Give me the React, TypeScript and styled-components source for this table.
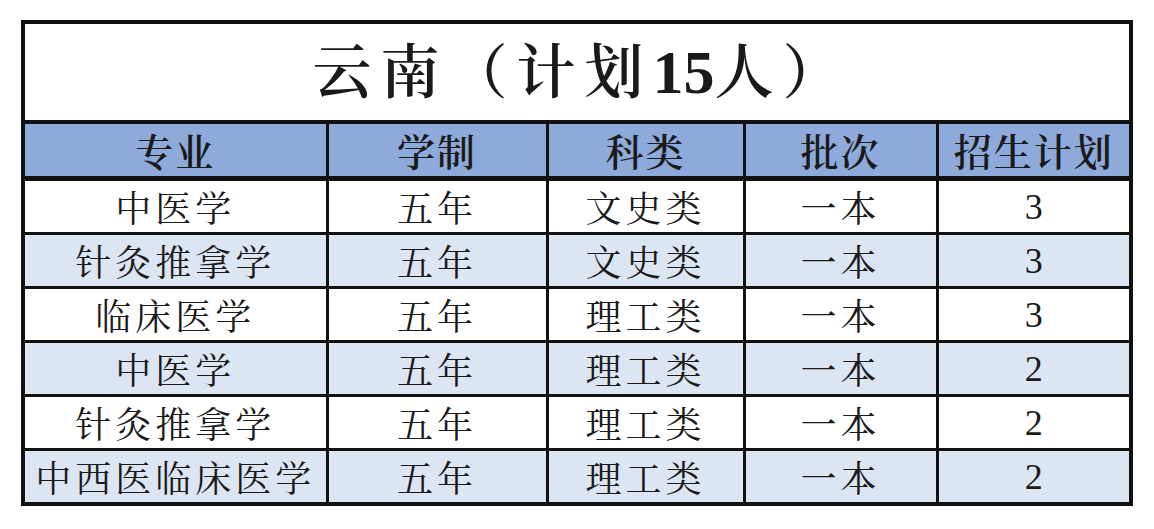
import React from 'react';
import styled, { createGlobalStyle } from 'styled-components';

const GlobalStyle = createGlobalStyle`
  body {
    margin: 0;
    background: #ffffff;
  }
`;

const Page = styled.div`
  padding: 20px 0 0 21px;
  width: 1154px;
  height: 529px;
  box-sizing: border-box;
  background: #ffffff;
`;

const Table = styled.table`
  width: 1108px;
  border-collapse: collapse;
  table-layout: fixed;
  border: 4px solid #111;
  font-family: "Noto Serif CJK SC", "Liberation Serif", "Noto Sans CJK SC", serif;
  color: #1a1a1a;
`;

const TitleCell = styled.th`
  height: 92px;
  padding: 0 0 4px 9px;
  font-size: 59px;
  font-weight: 600;
  line-height: 1;
  text-align: center;
  letter-spacing: 9px;
  background: #ffffff;
  border-bottom: 4px solid #111;
`;

const Digits = styled.span`
  font-family: "Liberation Serif", serif;
  font-size: 62px;
  font-weight: 700;
  letter-spacing: 0;
`;

const HeadCell = styled.th`
  height: 52px;
  padding: 0;
  font-size: 38px;
  font-weight: 600;
  letter-spacing: 2px;
  line-height: 1;
  text-align: center;
  background: #8eaadb;
  border-left: 3px solid #111;
  border-bottom: 5px solid #111;
`;

const Row = styled.tr<{ $shade: boolean }>`
  background: ${(p) => (p.$shade ? '#dce6f2' : '#ffffff')};
`;

const Cell = styled.td<{ $num?: boolean }>`
  height: 51px;
  padding: 0;
  text-align: center;
  line-height: 1;
  font-size: ${(p) => (p.$num ? '36px' : '36px')};
  font-family: ${(p) =>
    p.$num
      ? '"Liberation Serif", serif'
      : '"Noto Serif CJK SC", "Liberation Serif", "Noto Sans CJK SC", serif'};
  letter-spacing: ${(p) => (p.$num ? '0' : '4px')};
  border-left: 3px solid #111;
  border-bottom: 3px solid #111;
`;

const widths = [304, 220, 197, 193, 194];
const headers = ['专业', '学制', '科类', '批次', '招生计划'];

const rows = [
  ['中医学', '五年', '文史类', '一本', '3'],
  ['针灸推拿学', '五年', '文史类', '一本', '3'],
  ['临床医学', '五年', '理工类', '一本', '3'],
  ['中医学', '五年', '理工类', '一本', '2'],
  ['针灸推拿学', '五年', '理工类', '一本', '2'],
  ['中西医临床医学', '五年', '理工类', '一本', '2'],
];

export default function App() {
  return (
    <Page>
      <GlobalStyle />
      <Table>
        <colgroup>
          {widths.map((w, i) => (
            <col key={i} style={{ width: w }} />
          ))}
        </colgroup>
        <thead>
          <tr>
            <TitleCell colSpan={5}>
              云南（计划<Digits>15</Digits>人）
            </TitleCell>
          </tr>
          <tr>
            {headers.map((h) => (
              <HeadCell key={h}>{h}</HeadCell>
            ))}
          </tr>
        </thead>
        <tbody>
          {rows.map((r, i) => (
            <Row key={i} $shade={i % 2 === 1}>
              {r.map((c, j) => (
                <Cell key={j} $num={j === 4}>
                  {c}
                </Cell>
              ))}
            </Row>
          ))}
        </tbody>
      </Table>
    </Page>
  );
}
